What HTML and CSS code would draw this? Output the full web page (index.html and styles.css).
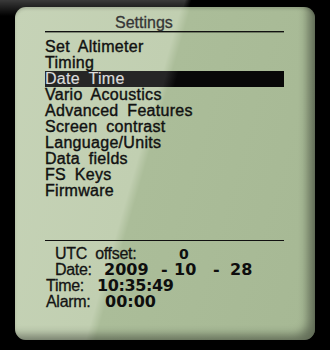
FILE: index.html
```html
<!DOCTYPE html>
<html>
<head>
<meta charset="utf-8">
<link rel="stylesheet" href="styles.css">
</head>
<body>
<div class="screen">
  <div class="title">Settings</div>
  <ul class="menu">
    <li>Set Altimeter</li>
    <li>Timing</li>
    <li class="sel">Date Time</li>
    <li>Vario Acoustics</li>
    <li>Advanced Features</li>
    <li>Screen contrast</li>
    <li>Language/Units</li>
    <li>Data fields</li>
    <li>FS Keys</li>
    <li>Firmware</li>
  </ul>
  <div class="info">
    <div class="row"><span class="lbl l-utc">UTC offset:</span><span class="num n-sm">0</span></div>
    <div class="row"><span class="lbl l-date">Date:</span><span class="num d-y">2009</span><span class="num d-s1">-</span><span class="num d-m">10</span><span class="num d-s2">-</span><span class="num">28</span></div>
    <div class="row"><span class="lbl l-time">Time:</span><span class="num n-time">10:35:49</span></div>
    <div class="row"><span class="lbl l-alarm">Alarm:</span><span class="num">00:00</span></div>
  </div>
</div>
</body>
</html>
```
FILE: styles.css
```css
html, body {
  margin: 0;
  padding: 0;
}
body {
  width: 330px;
  height: 350px;
  overflow: hidden;
  background:
    linear-gradient(to bottom, rgba(0,0,0,0) 0, #000 16px),
    linear-gradient(106deg, #3a3a3a 0, #3a3a3a 43%, #000 44.5%);
  font-family: "Liberation Sans", Arial, sans-serif;
  color: #141414;
}
.screen {
  margin: 7px 15px 0;
  width: 300px;
  height: 333px;
  box-sizing: border-box;
  padding: 8px 31px 0 30px;
  border-radius: 11px;
  background: linear-gradient(106deg, #c6d3b7 0, #c1cfb1 42%, #abbd99 44.5%, #a6b894 100%);
  box-shadow: inset -10px -8px 10px -3px rgba(0,0,0,0.4), inset 0 2px 3px rgba(0,0,0,0.15);
}
.title {
  height: 16px;
  line-height: 16px;
  font-size: 16px;
  padding-left: 70px;
  color: #363636;
  -webkit-text-stroke: 0.3px #363636;
  border-bottom: 1px solid #111;
  box-shadow: 0 1px 0 rgba(0,0,0,0.35);
}
.menu {
  list-style: none;
  margin: 7px 0 0;
  padding: 0;
}
.menu li {
  height: 16px;
  line-height: 16px;
  font-size: 16px;
  letter-spacing: 0.3px;
  word-spacing: 4px;
  white-space: nowrap;
  -webkit-text-stroke: 0.4px #111;
  color: #111;
}
.menu li.sel {
  background: linear-gradient(106deg, #262626 0, #262626 50%, #080808 55%);
  color: #dcdcdc;
  -webkit-text-stroke: 0.2px #dcdcdc;
}
.info {
  margin-top: 41px;
  border-top: 1px solid #111;
  padding-top: 5px;
}
.row {
  display: flex;
  align-items: baseline;
  height: 16px;
  line-height: 16px;
  font-size: 16px;
  white-space: nowrap;
}
.lbl {
  display: inline-block;
  -webkit-text-stroke: 0.3px #141414;
  letter-spacing: -0.3px;
  word-spacing: 4px;
}
.l-utc { margin-left: 10px; width: 124px; }
.l-date { margin-left: 10px; width: 49px; }
.l-time { margin-left: 1px; width: 51px; }
.l-alarm { margin-left: 1px; width: 59px; }
.num {
  display: inline-block;
  font-family: "DejaVu Sans", sans-serif;
  font-size: 16px;
  line-height: 14px;
  font-weight: bold;
  color: #0e0e0e;
}
.n-sm { font-size: 14px; }
.n-time { letter-spacing: -0.4px; }
.d-y { width: 57px; }
.d-s1 { width: 13px; }
.d-m { width: 39px; }
.d-s2 { width: 17px; }
```
